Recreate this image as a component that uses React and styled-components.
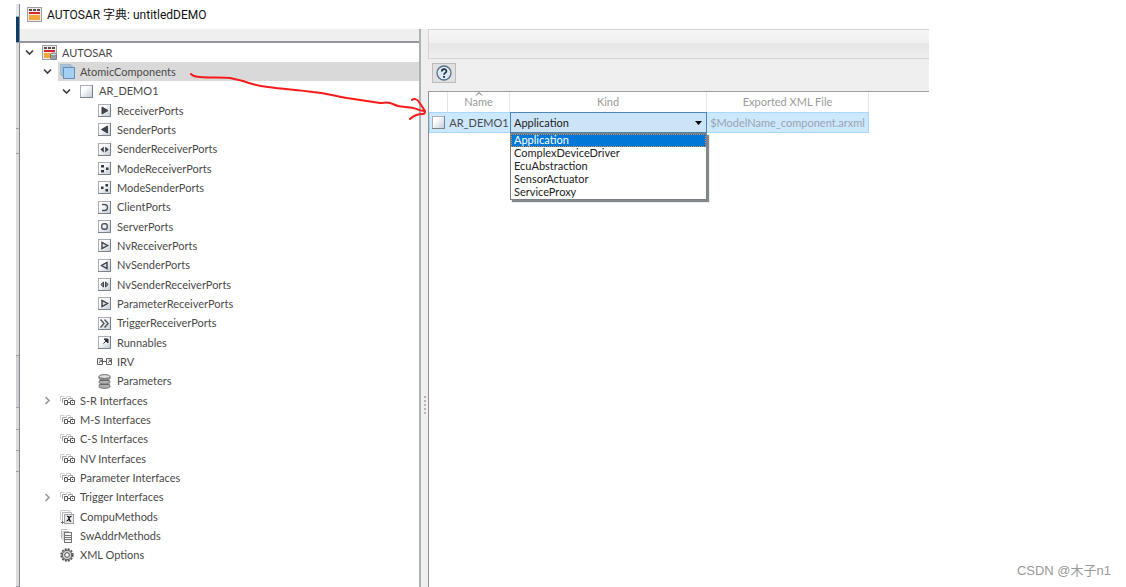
import React, { useState } from "react";
import styled, { createGlobalStyle } from "styled-components";

const GlobalStyle = createGlobalStyle`
  * { box-sizing: border-box; }
  body { margin: 0; background: #fff; }
  body, button, select { font-family: Lato, "Noto Sans CJK SC", sans-serif; }
`;

const Screen = styled.main`
  position: relative;
  display: flex;
  min-height: 100vh;
  padding: 0 197px 0 16px;
  color: #4a4a4a;
  font-size: 11px;
`;

const Backdrop = styled.div`
  width: 4px;
  margin-top: 4px;
  display: flex;
  flex-direction: column;
  border-right: 1px solid #85888f;
`;

const BackdropBlock = styled.div`
  flex: ${(p) => (p.$size ? `0 0 ${p.$size}px` : "1")};
  background: ${(p) => p.$color};
  border-bottom: 1px solid #a0a2a7;
`;

const Window = styled.section`
  flex: 1;
  min-width: 0;
  display: flex;
  flex-direction: column;
`;

const TitleBar = styled.header`
  height: 29px;
  display: flex;
  align-items: center;
  gap: 5px;
  padding-left: 7px;
`;

const Title = styled.h1`
  margin: 0;
  color: #111;
  font-size: 12px;
  font-weight: 400;
  line-height: 16px;
  white-space: nowrap;
  font-family: Roboto, "Noto Sans CJK SC", sans-serif;
`;

const Panes = styled.div`
  flex: 1;
  display: flex;
`;

const TreePane = styled.nav`
  flex: 0 0 401px;
  display: flex;
  flex-direction: column;
  border-right: 2px solid #adb1b8;
`;

const TreeStrip = styled.div`
  height: 14px;
  background: #efefef;
  border-bottom: 2px solid #94979d;
`;

const TreeList = styled.ul`
  margin: 0;
  padding: 0;
  list-style: none;
`;

const TreeRow = styled.li`
  display: flex;
  align-items: stretch;
  height: 19px;
  padding-left: ${(p) => p.$indent}px;
  &:nth-child(3n) { height: 20px; }
`;

const Twisty = styled.button`
  flex: 0 0 20px;
  display: flex;
  align-items: center;
  justify-content: center;
  padding: 0 2px 0 0;
  border: 0;
  background: none;
`;

const TwistySpace = styled.span`
  flex: 0 0 20px;
`;

const TreeItem = styled.div`
  flex: 1;
  display: flex;
  align-items: center;
  gap: 4px;
  background: ${(p) => (p.$selected ? "#d9d9d9" : "transparent")};
  line-height: 16px;
  white-space: nowrap;
`;

const IconSlot = styled.span`
  flex: 0 0 18px;
  display: flex;
  align-items: center;
  justify-content: center;
`;

const Splitter = styled.div`
  flex: 0 0 7px;
  display: flex;
  flex-direction: column;
  align-items: center;
  justify-content: center;
  gap: 2px;
  padding-top: 194px;
  background: #efefef;
`;

const GripDot = styled.span`
  width: 2px;
  height: 2px;
  background: #b4b4b4;
`;

const DetailPane = styled.div`
  flex: 1;
  min-width: 0;
  display: flex;
  flex-direction: column;
`;

const MenuBand = styled.div`
  height: 30px;
  border: solid #d4d4d4;
  border-width: 1px 0 1px 1px;
  background: linear-gradient(#f6f6f6, #f0f0f0 45%, #e6e6e6 50%, #efefef);
`;

const ToolBar = styled.div`
  height: 32px;
  display: flex;
  align-items: center;
  padding: 0 4px 4px;
  background: #efefef;
`;

const HelpButton = styled.button`
  width: 24px;
  height: 20px;
  display: flex;
  align-items: center;
  justify-content: center;
  padding: 0;
  border: 1px solid #bcbcbc;
  background: #e1e1e1;
`;

const TableArea = styled.div`
  flex: 1;
  border-top: 1px solid #9a9da3;
  border-left: 1px solid #8d9097;
`;

const Table = styled.table`
  table-layout: fixed;
  width: 440px;
  border-collapse: separate;
  border-spacing: 0;
`;

const HeadCell = styled.th`
  position: relative;
  width: ${(p) => p.$width}px;
  height: 20px;
  padding: 0;
  border-right: 1px solid #e6e6e6;
  color: #9b9b9b;
  font-weight: 400;
  line-height: 16px;
`;

const SortMark = styled.svg`
  position: absolute;
  top: 0;
  left: calc(50% - 4px);
`;

const Cell = styled.td`
  height: 21px;
  padding: 0;
  border: solid #a8d8fb;
  border-width: 1px ${(p) => (p.$last ? "1px" : "0")} 1px ${(p) => (p.$first ? "1px" : "0")};
  background: #cce8ff;
  color: ${(p) => (p.$muted ? "#98a4b0" : "#4a4a4a")};
  text-align: center;
  line-height: 16px;
  white-space: nowrap;
  svg { display: block; margin: 0 2px; }
`;

const KindCell = styled.td`
  position: relative;
  height: 21px;
  padding: 0;
`;

const KindSelect = styled.select`
  appearance: none;
  display: block;
  width: 100%;
  height: 21px;
  padding: 0 16px 0 3px;
  border: 1px solid #4a86b8;
  border-radius: 0;
  background: #cce4f7;
  color: #222;
  font-size: 11px;
  line-height: 16px;
`;

const SelectArrow = styled.svg`
  position: absolute;
  top: 9px;
  right: 5px;
  pointer-events: none;
`;

const OptionList = styled.ul`
  position: absolute;
  top: 100%;
  left: 0;
  z-index: 2;
  width: 100%;
  margin: 0;
  padding: 0;
  list-style: none;
  border: 1px solid #7b7f86;
  background: #fff;
  box-shadow: 2px 2px 1px #85888d;
`;

const Option = styled.li`
  height: 13px;
  padding-left: 3px;
  color: ${(p) => (p.$active ? "#fff" : "#222")};
  background: ${(p) => (p.$active ? "#0078d7" : "#fff")};
  outline: ${(p) => (p.$active ? "1px dotted #d58a4a" : "none")};
  outline-offset: -1px;
  text-align: left;
  line-height: 12px;
`;

const Annotation = styled.svg`
  position: absolute;
  top: 66px;
  left: 186px;
  z-index: 3;
  pointer-events: none;
`;

const Watermark = styled.p`
  position: absolute;
  right: 15px;
  bottom: 6px;
  margin: 0;
  color: #999;
  font-family: "Liberation Sans", "Noto Sans CJK SC", sans-serif;
  font-size: 13px;
  line-height: 20px;
`;

const glyphs = {
  receiver: <path d="M4 3v7l6-3.500z" fill="#3c4248" stroke="#3c4248" />,
  sender: <path d="M9.500 3v7l-6-3.500z" fill="#3c4248" stroke="#3c4248" />,
  both: <path d="M5.800 3.500v6l-3.500-3zM7.200 3.500v6l3.500-3z" fill="#3c4248" />,
  modeIn: <path d="M3 3h3v2.500H3zM3 8h3v2.500H3zM8 5.500h2.500V8H8z" fill="#33383e" />,
  modeOut: <path d="M7.500 3H10v2.500H7.500zM7.500 8H10v2.500H7.500zM3 5.500h2.500V8H3z" fill="#33383e" />,
  client: <path d="M4 3.500h2.500a3 3 0 0 1 0 6H4" fill="none" stroke="#4d545b" strokeWidth="1.300" />,
  server: <rect x="3.800" y="3.800" width="5.400" height="5.400" rx="2" fill="none" stroke="#4d545b" strokeWidth="1.400" />,
  nvIn: <path d="M4 3.500v6l5.500-3z" fill="#dfe5ea" stroke="#3c4248" strokeWidth="1.400" />,
  nvOut: <path d="M9 3.500v6l-5.500-3z" fill="#dfe5ea" stroke="#3c4248" strokeWidth="1.400" />,
  nvBoth: <path d="M5.500 4v5L2.800 6.500zM7.500 4v5l2.700-2.500z" fill="#8b939b" stroke="#3c4248" />,
  trigger: <path d="M2.500 2.500l3.500 4-3.500 4M6.500 2.500l3.500 4-3.500 4" fill="none" stroke="#4d545b" strokeWidth="1.400" />,
  run: <path d="M6 3h4v4zM5.500 7.500L9 4" fill="#2b3036" stroke="#2b3036" />,
  blank: null,
};

function PortIcon({ kind }) {
  return (
    <svg width="13" height="13" viewBox="0 0 13 13" aria-hidden="true">
      <defs>
        <linearGradient id={`port-${kind}`} x1="0" y1="0" x2="1" y2="1">
          <stop offset="0.300" stopColor="#ffffff" />
          <stop offset="1" stopColor="#bfcbd6" />
        </linearGradient>
      </defs>
      <rect x="0.500" y="0.500" width="12" height="12" fill={`url(#port-${kind})`} stroke="#a9afb5" />
      <path d="M12.500 0v12.500H0" fill="none" stroke="#7b828a" />
      {glyphs[kind]}
    </svg>
  );
}

function DictionaryIcon({ badge }) {
  return (
    <svg width="15" height="15" viewBox="0 0 15 15" aria-hidden="true">
      <rect x="0.500" y="0.500" width="14" height="14" fill="#ececec" stroke="#a0a0a0" />
      <path d="M2 2h3v2H2zM6 2h3v2H6zM10 2h3v2h-3z" fill="#5c4c4c" />
      <path d="M2 5h11v2H2z" fill="#d9262c" />
      <path d="M2 8h11v5H2z" fill="#f5a83a" />
      {badge && (
        <g stroke="#777">
          <path d="M8.500 9.500v3.500c0 1.800 6 1.800 6 0V9.500z" fill="#a5a5a5" />
          <ellipse cx="11.500" cy="9.500" rx="3" ry="1.500" fill="#d5d5d5" />
        </g>
      )}
    </svg>
  );
}

function ComponentsIcon() {
  return (
    <svg width="15" height="15" viewBox="0 0 15 15" aria-hidden="true">
      <rect x="0.500" y="0.500" width="10" height="10" fill="#c9def0" stroke="#a3bacd" />
      <rect x="2" y="2" width="10" height="10" fill="#b7d5ef" stroke="#8eabc4" />
      <rect x="3.500" y="3.500" width="11" height="11" fill="#a5cff2" stroke="#6890b0" />
    </svg>
  );
}

function IrvIcon() {
  return (
    <svg width="15" height="7" viewBox="0 0 15 7" aria-hidden="true">
      <path d="M0.500 0.500h5v6h-5zM9.500 0.500h5v6h-5zM6 3.500h3" fill="none" stroke="#666" />
      <path d="M2 5l2.500-3M2.500 2h2v2M11 5l2.500-3M11.500 2h2v2" fill="none" stroke="#666" />
    </svg>
  );
}

function ParametersIcon() {
  return (
    <svg width="13" height="15" viewBox="0 0 13 15" aria-hidden="true">
      <g fill="#b0b0b0" stroke="#686868">
        <path d="M1.500 10.500c0 1-.5 1-.5 2 0 2.400 11 2.400 11 0 0-1-.5-1-.5-2z" />
        <path d="M1.500 6.500c0 1-.5 1-.5 1.800 0 2.400 11 2.400 11 0 0-.8-.5-.8-.5-1.800z" />
        <path d="M1 2.500v1.700c0 2.400 11 2.400 11 0V2.500z" />
        <ellipse cx="6.500" cy="2.500" rx="5.500" ry="1.900" fill="#e2e2e2" />
      </g>
    </svg>
  );
}

function InterfaceIcon() {
  return (
    <svg width="15" height="10" viewBox="0 0 15 10" aria-hidden="true">
      <path d="M0.500 5V0.500h4M6.500 2V0.500h4V2" fill="none" stroke="#cfcfcf" />
      <path d="M2.500 7V2.500h4M8.500 4V2.500h4V4" fill="none" stroke="#a0a0a0" />
      <path d="M4.500 4.500h3v4h-3zM10.500 4.500h4v4h-4zM8 6.500h2" fill="#fff" stroke="#5a5a5a" />
      <path d="M12 6h1v1h-1z" fill="#5a5a5a" />
    </svg>
  );
}

function CompuIcon() {
  return (
    <svg width="14" height="14" viewBox="0 0 14 14" aria-hidden="true">
      <path d="M0.500 10V0.500h9V2" fill="none" stroke="#d0d0d0" />
      <path d="M2.500 12V2.500h9V4" fill="none" stroke="#b4b4b4" />
      <rect x="4.500" y="4.500" width="9" height="9" fill="#e6eaee" stroke="#a0a0a0" />
      <path d="M7 6.500c1.500-.5 1.800.8 2.200 2.500s.8 2.500 2 2M11.500 6.500c-1.500-.3-2 1-2.500 2s-1.200 2.700-2.500 2.500" fill="none" stroke="#111" strokeWidth="1.200" />
      <path d="M1 12.500h3M2.500 11v3" stroke="#777" />
    </svg>
  );
}

function AddrIcon() {
  return (
    <svg width="12" height="14" viewBox="0 0 12 14" aria-hidden="true">
      <path d="M0.500 9.500v-9h6M2 11.500v-9h6" fill="none" stroke="#b9b9b9" />
      <rect x="3.500" y="3.500" width="7" height="10" fill="#f4f4f4" stroke="#777" />
      <path d="M4 6.500h6M4 8.500h6M4 10.500h6" stroke="#777" />
    </svg>
  );
}

function GearIcon() {
  return (
    <svg width="14" height="14" viewBox="0 0 14 14" aria-hidden="true">
      <circle cx="7" cy="7" r="5.900" fill="none" stroke="#555" strokeWidth="1.600" strokeDasharray="2 1.090" />
      <circle cx="7" cy="7" r="4.800" fill="#cdcdcd" stroke="#505050" />
      <circle cx="7" cy="7" r="2.300" fill="#fff" stroke="#505050" />
    </svg>
  );
}

function Chevron({ open }) {
  return (
    <svg width="9" height="9" viewBox="0 0 9 9" aria-hidden="true">
      <path
        d={open ? "M1 2.500l3.500 3.500 3.500-3.500" : "M2.500 1l3.500 3.500-3.500 3.500"}
        fill="none"
        stroke={open ? "#404040" : "#9a9a9a"}
        strokeWidth="1.700"
      />
    </svg>
  );
}

const icons = {
  dictionary: <DictionaryIcon badge />,
  components: <ComponentsIcon />,
  irv: <IrvIcon />,
  parameters: <ParametersIcon />,
  interface: <InterfaceIcon />,
  compu: <CompuIcon />,
  addr: <AddrIcon />,
  gear: <GearIcon />,
};

const indents = [0, 18, 37, 55];

const rows = [
  ["AUTOSAR", 0, "dictionary", "open"],
  ["AtomicComponents", 1, "components", "open"],
  ["AR_DEMO1", 2, "blank", "open"],
  ["ReceiverPorts", 3, "receiver"],
  ["SenderPorts", 3, "sender"],
  ["SenderReceiverPorts", 3, "both"],
  ["ModeReceiverPorts", 3, "modeIn"],
  ["ModeSenderPorts", 3, "modeOut"],
  ["ClientPorts", 3, "client"],
  ["ServerPorts", 3, "server"],
  ["NvReceiverPorts", 3, "nvIn"],
  ["NvSenderPorts", 3, "nvOut"],
  ["NvSenderReceiverPorts", 3, "nvBoth"],
  ["ParameterReceiverPorts", 3, "nvIn"],
  ["TriggerReceiverPorts", 3, "trigger"],
  ["Runnables", 3, "run"],
  ["IRV", 3, "irv"],
  ["Parameters", 3, "parameters"],
  ["S-R Interfaces", 1, "interface", "closed"],
  ["M-S Interfaces", 1, "interface"],
  ["C-S Interfaces", 1, "interface"],
  ["NV Interfaces", 1, "interface"],
  ["Parameter Interfaces", 1, "interface"],
  ["Trigger Interfaces", 1, "interface", "closed"],
  ["CompuMethods", 1, "compu"],
  ["SwAddrMethods", 1, "addr"],
  ["XML Options", 1, "gear"],
];

const kinds = ["Application", "ComplexDeviceDriver", "EcuAbstraction", "SensorActuator", "ServiceProxy"];

export default function App() {
  const [selected, setSelected] = useState("AtomicComponents");
  const [kind, setKind] = useState("Application");

  return (
    <>
      <GlobalStyle />
      <Screen>
        <Backdrop>
          <BackdropBlock $size={13} $color="#e4e8ec" />
          <BackdropBlock $size={26} $color="#0c3c68" />
          <BackdropBlock $size={86} $color="#dcdcdc" />
          <BackdropBlock $size={25} $color="#dcdcdc" />
          <BackdropBlock $size={202} $color="#dcdcdc" />
          <BackdropBlock $size={52} $color="#cfcfd1" />
          <BackdropBlock $size={22} $color="#dcdcdc" />
          <BackdropBlock $size={21} $color="#dcdcdc" />
          <BackdropBlock $size={21} $color="#dcdcdc" />
          <BackdropBlock $color="#dcdcdc" />
        </Backdrop>
        <Window>
          <TitleBar>
            <DictionaryIcon />
            <Title>AUTOSAR 字典: untitledDEMO</Title>
          </TitleBar>
          <Panes>
            <TreePane aria-label="Dictionary">
              <TreeStrip />
              <TreeList>
                {rows.map(([label, level, icon, state]) => (
                  <TreeRow key={label} $indent={indents[level]}>
                    {state ? (
                      <Twisty type="button" aria-label={`Toggle ${label}`}>
                        <Chevron open={state === "open"} />
                      </Twisty>
                    ) : (
                      <TwistySpace />
                    )}
                    <TreeItem $selected={label === selected} onClick={() => setSelected(label)}>
                      <IconSlot>{icons[icon] || <PortIcon kind={icon} />}</IconSlot>
                      {label}
                    </TreeItem>
                  </TreeRow>
                ))}
              </TreeList>
            </TreePane>
            <Splitter>
              <GripDot />
              <GripDot />
              <GripDot />
              <GripDot />
              <GripDot />
            </Splitter>
            <DetailPane>
              <MenuBand />
              <ToolBar>
                <HelpButton type="button" aria-label="Help">
                  <svg width="16" height="16" viewBox="0 0 16 16" aria-hidden="true">
                    <circle cx="8" cy="8" r="7" fill="#dbe8f2" stroke="#55718c" strokeWidth="1.300" />
                    <path d="M5.800 6.500c0-3 4.600-3 4.600-.3C10.400 8 8 7.800 8 9.800" fill="none" stroke="#1d3347" strokeWidth="1.700" />
                    <path d="M7.100 11h1.900v1.800H7.100z" fill="#1d3347" />
                  </svg>
                </HelpButton>
              </ToolBar>
              <TableArea>
                <Table>
                  <thead>
                    <tr>
                      <HeadCell $width={19} aria-label="Icon" />
                      <HeadCell $width={62}>
                        <SortMark width="8" height="4" viewBox="0 0 8 4" aria-hidden="true">
                          <path d="M1 3.500l3-3 3 3" fill="none" stroke="#666" />
                        </SortMark>
                        Name
                      </HeadCell>
                      <HeadCell $width={197}>Kind</HeadCell>
                      <HeadCell $width={162}>Exported XML File</HeadCell>
                    </tr>
                  </thead>
                  <tbody>
                    <tr>
                      <Cell $first><PortIcon kind="blank" /></Cell>
                      <Cell>AR_DEMO1</Cell>
                      <KindCell>
                        <KindSelect aria-label="Kind" value={kind} onChange={(e) => setKind(e.target.value)}>
                          {kinds.map((k) => <option key={k}>{k}</option>)}
                        </KindSelect>
                        <SelectArrow width="7" height="4" viewBox="0 0 7 4" aria-hidden="true">
                          <path d="M0 0h7L3.500 4z" fill="#000" />
                        </SelectArrow>
                        <OptionList role="listbox" aria-label="Kind options">
                          {kinds.map((k) => (
                            <Option key={k} role="option" aria-selected={k === kind} $active={k === kind} onClick={() => setKind(k)}>
                              {k}
                            </Option>
                          ))}
                        </OptionList>
                      </KindCell>
                      <Cell $last $muted>$ModelName_component.arxml</Cell>
                    </tr>
                  </tbody>
                </Table>
              </TableArea>
            </DetailPane>
          </Panes>
        </Window>
        <Annotation width="244" height="60" viewBox="0 0 244 60" aria-hidden="true">
          <path
            d="M5 8c3 3 6 3 9 3 10 1 20 0 30 1l13 3c8 3 16 5 25 6 15 2 30 3 45 5 11 1 23 4 34 6l33 5c4 0 7-1 10 0s5 2 8 3c5 1 10 1 15 2s7 3 11 3M226 34c2-2 5-1 7 2l6 9c0 2-1 3-2 3-5 0-9 1-13 5"
            fill="none"
            stroke="#f91a1a"
            strokeWidth="2"
            strokeLinecap="round"
            strokeLinejoin="round"
          />
        </Annotation>
        <Watermark>CSDN @木子n1</Watermark>
      </Screen>
    </>
  );
}
